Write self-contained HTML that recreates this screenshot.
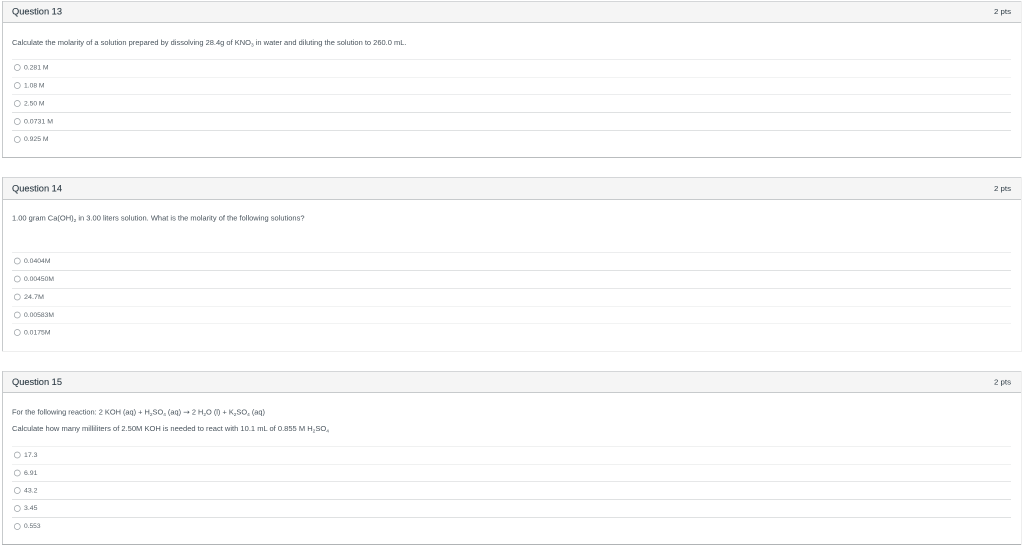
<!DOCTYPE html>
<html>
<head>
<meta charset="utf-8">
<style>
html,body{margin:0;padding:0;background:#fff;width:1024px;height:556px;overflow:hidden}
svg{display:block;font-family:"Liberation Sans",sans-serif}
.h{font-size:9.4px;fill:#2d3b45;stroke:#2d3b45;stroke-width:.1px}
.q{font-size:7px;fill:#4a555e}
.o{font-size:6.8px;fill:#5f686f}
.r{fill:#fff;stroke:#9aa0a5;stroke-width:.7}
</style>
</head>
<body>
<svg width="1024" height="556" viewBox="0 0 1024 556" xmlns="http://www.w3.org/2000/svg">
<g style="filter:blur(.3px)">
<!-- Q13 -->
<rect x="2" y="1" width="1020" height="21" fill="#f5f5f5"/>
<rect x="2" y="1" width="1020" height="1" fill="#d4d6d8"/>
<rect x="2" y="22" width="1020" height="1" fill="#c7cacc"/>
<rect x="2" y="1" width="1" height="157" fill="#c7cacc"/>
<rect x="2" y="157" width="1020" height="1" fill="#b9bcbe"/>
<rect x="1021" y="1" width="1" height="157" fill="#eeeeee"/>
<text class="h" x="12" y="14.5" textLength="50" lengthAdjust="spacingAndGlyphs">Question 13</text>
<text class="o" x="994" y="14" textLength="17" lengthAdjust="spacingAndGlyphs" style="font-size:7.4px;fill:#2d3b45">2 pts</text>
<text class="q" x="12" y="45" textLength="394.5" lengthAdjust="spacingAndGlyphs">Calculate the molarity of a solution prepared by dissolving 28.4g of KNO<tspan dy="1.5" font-size="4.5">3</tspan><tspan dy="-1.5"> in water and diluting the solution to 260.0 mL.</tspan></text>
<rect x="12" y="59" width="999" height="1" fill="#ecedee"/>
<rect x="12" y="77" width="999" height="1" fill="#f2f3f3"/>
<rect x="12" y="94" width="999" height="1" fill="#ecedee"/>
<rect x="12" y="112" width="999" height="1" fill="#dfe1e2"/>
<rect x="12" y="130" width="999" height="1" fill="#dfe1e2"/>
<circle class="r" cx="17.3" cy="67.5" r="3"/><text class="o" x="24" y="69.5" textLength="24.5" lengthAdjust="spacingAndGlyphs">0.281 M</text>
<circle class="r" cx="17.3" cy="85.5" r="3"/><text class="o" x="24" y="87.5" textLength="20.5" lengthAdjust="spacingAndGlyphs">1.08 M</text>
<circle class="r" cx="17.3" cy="103.5" r="3"/><text class="o" x="24" y="105.5" textLength="20.5" lengthAdjust="spacingAndGlyphs">2.50 M</text>
<circle class="r" cx="17.3" cy="121.5" r="3"/><text class="o" x="24" y="123.5" textLength="29" lengthAdjust="spacingAndGlyphs">0.0731 M</text>
<circle class="r" cx="17.3" cy="139.5" r="3"/><text class="o" x="24" y="141" textLength="24.5" lengthAdjust="spacingAndGlyphs">0.925 M</text>

<!-- Q14 -->
<rect x="2" y="177" width="1020" height="23" fill="#f5f5f5"/>
<rect x="2" y="177" width="1020" height="1" fill="#d4d6d8"/>
<rect x="2" y="199" width="1020" height="1" fill="#c7cacc"/>
<rect x="2" y="177" width="1" height="175" fill="#c7cacc"/>
<rect x="2" y="351" width="1020" height="1" fill="#eeeeee"/>
<rect x="1021" y="177" width="1" height="175" fill="#eeeeee"/>
<text class="h" x="12" y="191.5" textLength="50" lengthAdjust="spacingAndGlyphs">Question 14</text>
<text class="o" x="994" y="191" textLength="17" lengthAdjust="spacingAndGlyphs" style="font-size:7.4px;fill:#2d3b45">2 pts</text>
<text class="q" x="12" y="220.5" textLength="292.5" lengthAdjust="spacingAndGlyphs">1.00 gram Ca(OH)<tspan dy="1.5" font-size="4.5">2</tspan><tspan dy="-1.5"> in 3.00 liters solution. What is the molarity of the following solutions?</tspan></text>
<rect x="12" y="252" width="999" height="1" fill="#ecedee"/>
<rect x="12" y="270" width="999" height="1" fill="#dfe1e2"/>
<rect x="12" y="288" width="999" height="1" fill="#e6e7e8"/>
<rect x="12" y="306" width="999" height="1" fill="#f2f3f3"/>
<rect x="12" y="323" width="999" height="1" fill="#f2f3f3"/>
<circle class="r" cx="17.3" cy="261" r="3"/><text class="o" x="24" y="263" textLength="26.5" lengthAdjust="spacingAndGlyphs">0.0404M</text>
<circle class="r" cx="17.3" cy="279" r="3"/><text class="o" x="24" y="281" textLength="30" lengthAdjust="spacingAndGlyphs">0.00450M</text>
<circle class="r" cx="17.3" cy="297" r="3"/><text class="o" x="24" y="299" textLength="20" lengthAdjust="spacingAndGlyphs">24.7M</text>
<circle class="r" cx="17.3" cy="315" r="3"/><text class="o" x="24" y="317" textLength="30" lengthAdjust="spacingAndGlyphs">0.00583M</text>
<circle class="r" cx="17.3" cy="332.5" r="3"/><text class="o" x="24" y="334.5" textLength="26.5" lengthAdjust="spacingAndGlyphs">0.0175M</text>

<!-- Q15 -->
<rect x="2" y="371" width="1020" height="21" fill="#f5f5f5"/>
<rect x="2" y="371" width="1020" height="1" fill="#d4d6d8"/>
<rect x="2" y="392" width="1020" height="1" fill="#c7cacc"/>
<rect x="2" y="371" width="1" height="174" fill="#c7cacc"/>
<rect x="2" y="544" width="1020" height="1" fill="#b0b3b5"/>
<rect x="1021" y="371" width="1" height="174" fill="#eeeeee"/>
<text class="h" x="12" y="385" textLength="50" lengthAdjust="spacingAndGlyphs">Question 15</text>
<text class="o" x="994" y="384.5" textLength="17" lengthAdjust="spacingAndGlyphs" style="font-size:7.4px;fill:#2d3b45">2 pts</text>
<text class="q" x="12" y="414.5" textLength="253" lengthAdjust="spacingAndGlyphs">For the following reaction: 2 KOH (aq) + H<tspan dy="1.5" font-size="4.5">2</tspan><tspan dy="-1.5">SO</tspan><tspan dy="1.5" font-size="4.5">4</tspan><tspan dy="-1.5"> (aq) </tspan><tspan font-family="DejaVu Sans" font-size="7.5">→</tspan><tspan> 2 H</tspan><tspan dy="1.5" font-size="4.5">2</tspan><tspan dy="-1.5">O (l) + K</tspan><tspan dy="1.5" font-size="4.5">2</tspan><tspan dy="-1.5">SO</tspan><tspan dy="1.5" font-size="4.5">4</tspan><tspan dy="-1.5"> (aq)</tspan></text>
<text class="q" x="12" y="431" textLength="317" lengthAdjust="spacingAndGlyphs">Calculate how many milliliters of 2.50M KOH is needed to react with 10.1 mL of 0.855 M H<tspan dy="1.5" font-size="4.5">2</tspan><tspan dy="-1.5">SO</tspan><tspan dy="1.5" font-size="4.5">4</tspan></text>
<rect x="12" y="446" width="999" height="1" fill="#f0f1f1"/>
<rect x="12" y="464" width="999" height="1" fill="#f0f1f1"/>
<rect x="12" y="481" width="999" height="1" fill="#e6e7e8"/>
<rect x="12" y="499" width="999" height="1" fill="#dfe1e2"/>
<rect x="12" y="517" width="999" height="1" fill="#dfe1e2"/>
<circle class="r" cx="17.3" cy="455" r="3"/><text class="o" x="24" y="457" textLength="13.5" lengthAdjust="spacingAndGlyphs">17.3</text>
<circle class="r" cx="17.3" cy="473" r="3"/><text class="o" x="24" y="475" textLength="13.5" lengthAdjust="spacingAndGlyphs">6.91</text>
<circle class="r" cx="17.3" cy="490.5" r="3"/><text class="o" x="24" y="492.5" textLength="13.5" lengthAdjust="spacingAndGlyphs">43.2</text>
<circle class="r" cx="17.3" cy="508.5" r="3"/><text class="o" x="24" y="510" textLength="13.5" lengthAdjust="spacingAndGlyphs">3.45</text>
<circle class="r" cx="17.3" cy="526.5" r="3"/><text class="o" x="24" y="528" textLength="16.5" lengthAdjust="spacingAndGlyphs">0.553</text>
</g>
</svg>
</body>
</html>
